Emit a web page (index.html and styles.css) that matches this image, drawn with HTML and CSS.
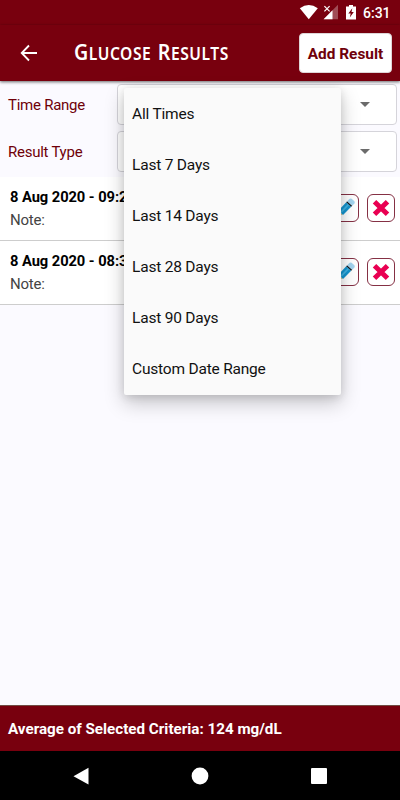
FILE: index.html
```html
<!DOCTYPE html>
<html lang="en">
<head>
<meta charset="utf-8">
<title>Glucose Results</title>
<link rel="stylesheet" href="styles.css">
</head>
<body>
<svg class="defs" width="0" height="0">
  <symbol id="pencil" viewBox="0 0 28 28">
    <path d="M5.5 22.5L7.5 16.5L11.5 20.5Z" fill="#e5bd78"/>
    <path d="M5.5 22.5L6.2 20.2L7.8 21.8Z" fill="#333"/>
    <path d="M7.5 16.5L15.2 8.3L20.2 12.8L12 21Z" fill="#1595cf"/>
    <path d="M9.3 17.8L16.9 9.9L18.2 11.1L10.5 19Z" fill="#42b4e3"/>
    <path d="M15.2 8.3L16.2 7.3L21.2 11.8L20.2 12.8Z" fill="#101820"/>
    <path d="M16.2 7.3L18.6 4.8Q19.6 4 20.6 4.8L23.4 7.2Q24.2 8.2 23.4 9.4L21.2 11.8Z" fill="#a4d5f0"/>
  </symbol>
  <symbol id="cross" viewBox="0 0 28 28">
    <path d="M7.5 7.8L20.5 20.2M20.5 7.8L7.5 20.2" stroke="#e90052" stroke-width="5"/>
  </symbol>
</svg>
<div class="screen">
  <div class="status">
    <svg width="100" height="25" viewBox="0 0 100 25">
      <path d="M.8 8.2Q9.8 2 18.8 8.2L9.8 19.2Z" fill="#fff"/>
      <path d="M39 4.8V19.2H24.6Z" fill="#fff" fill-opacity=".3"/>
      <path d="M33.5 10.3V19.2H24.6Z" fill="#fff"/>
      <path d="M25.4 6.2L30.6 11.4M30.6 6.2L25.4 11.4" stroke="#fff" stroke-width="1.2"/>
      <path d="M47 6.5H50V5H54V6.5H57V19.5H47Z" fill="#fff"/>
      <path d="M53.3 8.3L49.3 13.6H51.7L50.8 17.6L54.8 12H52.5Z" fill="#78000e"/>
    </svg>
    <span class="clock">6:31</span>
  </div>
  <header class="appbar">
    <svg class="back" width="20" height="20" viewBox="0 0 20 20"><path d="M18 10H3M10 2.5L2.7 10L10 17.5" fill="none" stroke="#fff" stroke-width="1.8"/></svg>
    <h1 class="title"><span class="word">Glucose</span> <span class="word">Results</span></h1>
    <button class="add">Add Result</button>
  </header>
  <section class="filters">
    <div class="filter"><label>Time Range</label><div class="select"><i class="caret"></i></div></div>
    <div class="filter"><label>Result Type</label><div class="select"><i class="caret"></i></div></div>
  </section>
  <main class="list">
    <article class="result">
      <div class="info"><b>8 Aug 2020 - 09:25</b><span>Note:</span></div>
      <button class="icon"><svg><use href="#pencil"/></svg></button>
      <button class="icon"><svg><use href="#cross"/></svg></button>
    </article>
    <article class="result">
      <div class="info"><b>8 Aug 2020 - 08:30</b><span>Note:</span></div>
      <button class="icon"><svg><use href="#pencil"/></svg></button>
      <button class="icon"><svg><use href="#cross"/></svg></button>
    </article>
  </main>
  <footer class="average">Average of Selected Criteria: 124 mg/dL</footer>
  <nav class="nav">
    <svg width="18" height="18" viewBox="0 0 18 18"><path d="M16.5 .8V17.5L1.5 9.2Z" fill="#fff"/></svg>
    <svg width="18" height="18" viewBox="0 0 18 18"><circle cx="9" cy="9" r="8.4" fill="#fff"/></svg>
    <svg width="18" height="18" viewBox="0 0 18 18"><rect x="1" y="1" width="16" height="16" rx="1" fill="#fff"/></svg>
  </nav>
  <ul class="menu">
    <li>All Times</li>
    <li>Last 7 Days</li>
    <li>Last 14 Days</li>
    <li>Last 28 Days</li>
    <li>Last 90 Days</li>
    <li>Custom Date Range</li>
  </ul>
</div>
</body>
</html>
```
FILE: styles.css
```css
* { box-sizing: border-box; }
body { margin: 0; font-family: Roboto, "Liberation Sans", sans-serif; }
button { font-family: inherit; }
.defs { position: absolute; }
.screen {
  position: relative;
  width: 400px;
  height: 800px;
  display: flex;
  flex-direction: column;
  overflow: hidden;
  background: #fbfaff;
}
.status {
  height: 25px;
  flex: none;
  display: flex;
  justify-content: flex-end;
  background: #78000e;
  color: #fff;
}
.status svg { margin: 0 -36px 0 0; }
.clock { width: 36px; font-size: 14px; font-weight: 500; line-height: 26px; }
.status { padding-right: 1px; }
.appbar {
  height: 56px;
  flex: none;
  display: flex;
  align-items: center;
  padding: 0 8px 0 19px;
  background: #78000e;
  color: #fff;
  box-shadow: 0 1px 3px rgba(0, 0, 0, .6);
  z-index: 1;
}
.title {
  width: 190px;
  margin: -2px 0 0 35px;
  font: 600 17.5px/26px "Noto Sans", "Open Sans", sans-serif;
  letter-spacing: .6px;
  text-transform: uppercase;
  white-space: nowrap;
  transform: scaleX(.893);
  transform-origin: left;
}
.word { display: inline-block; }
.word + .word { margin-left: 2px; }
.word::first-letter { font-size: 22px; }
.add {
  width: 93px;
  height: 40px;
  margin: 0 0 0 auto;
  padding: 1px 0 0;
  border: 1px solid #ded5d7;
  border-radius: 4px;
  background: #fff;
  color: #6f000a;
  font-size: 15.4px;
  font-weight: 700;
  white-space: nowrap;
}
.filters {
  height: 96px;
  flex: none;
  display: flex;
  flex-direction: column;
  gap: 7px;
  padding: 3.5px 3px 0 8px;
}
.filter { display: flex; height: 40px; align-items: center; }
.filter label { width: 109px; padding-top: 1px; color: #6f0008; font-size: 15px; letter-spacing: -.25px; }
.select {
  flex: 1;
  height: 41px;
  display: flex;
  align-items: center;
  justify-content: flex-end;
  padding-right: 26px;
  border: 1px solid #d5d4da;
  border-radius: 4px;
  background: #fff;
}
.caret { border: 5px solid transparent; border-top-color: #6b6b6b; border-bottom: 0; }
.list { flex: 1; }
.result {
  height: 64px;
  display: flex;
  align-items: center;
  gap: 8px;
  padding: 0 5px 0 10px;
  background: #fff;
  border-bottom: 1px solid #cdcdcd;
}
.info { flex: 1; display: flex; flex-direction: column; gap: 4px; padding-top: 1px; font-size: 15px; line-height: 19px; color: #444; letter-spacing: -.2px; }
.info b { color: #000; font-size: 14.7px; letter-spacing: -.06px; }
.icon {
  width: 28px;
  height: 28px;
  margin-top: -1px;
  padding: 0;
  border: 1px solid #853044;
  border-radius: 6px;
  background: #fff;
}
.icon svg { display: block; width: 28px; height: 28px; margin: -1px; }
.average {
  height: 46px;
  flex: none;
  padding-left: 8px;
  border-top: 1px solid #704b42;
  background: #78000e;
  color: #fff;
  font-size: 15.2px;
  font-weight: 700;
  line-height: 46px;
}
.nav {
  height: 49px;
  flex: none;
  display: flex;
  align-items: center;
  justify-content: space-between;
  padding: 0 73px 0 72px;
  background: #000;
}
.nav svg:last-child { margin-right: -1px; }
.menu {
  position: absolute;
  z-index: 2;
  left: 124px;
  top: 88px;
  width: 217px;
  height: 306.5px;
  margin: 0;
  padding: 0;
  list-style: none;
  border-radius: 2px;
  background: #fafafa;
  box-shadow: 0 8px 20px rgba(0, 0, 0, .22), 0 2px 8px rgba(0, 0, 0, .12);
}
.menu li { height: 51.1px; padding-left: 8px; font-size: 15.5px; letter-spacing: -.2px; line-height: 53px; color: #111; }
```
